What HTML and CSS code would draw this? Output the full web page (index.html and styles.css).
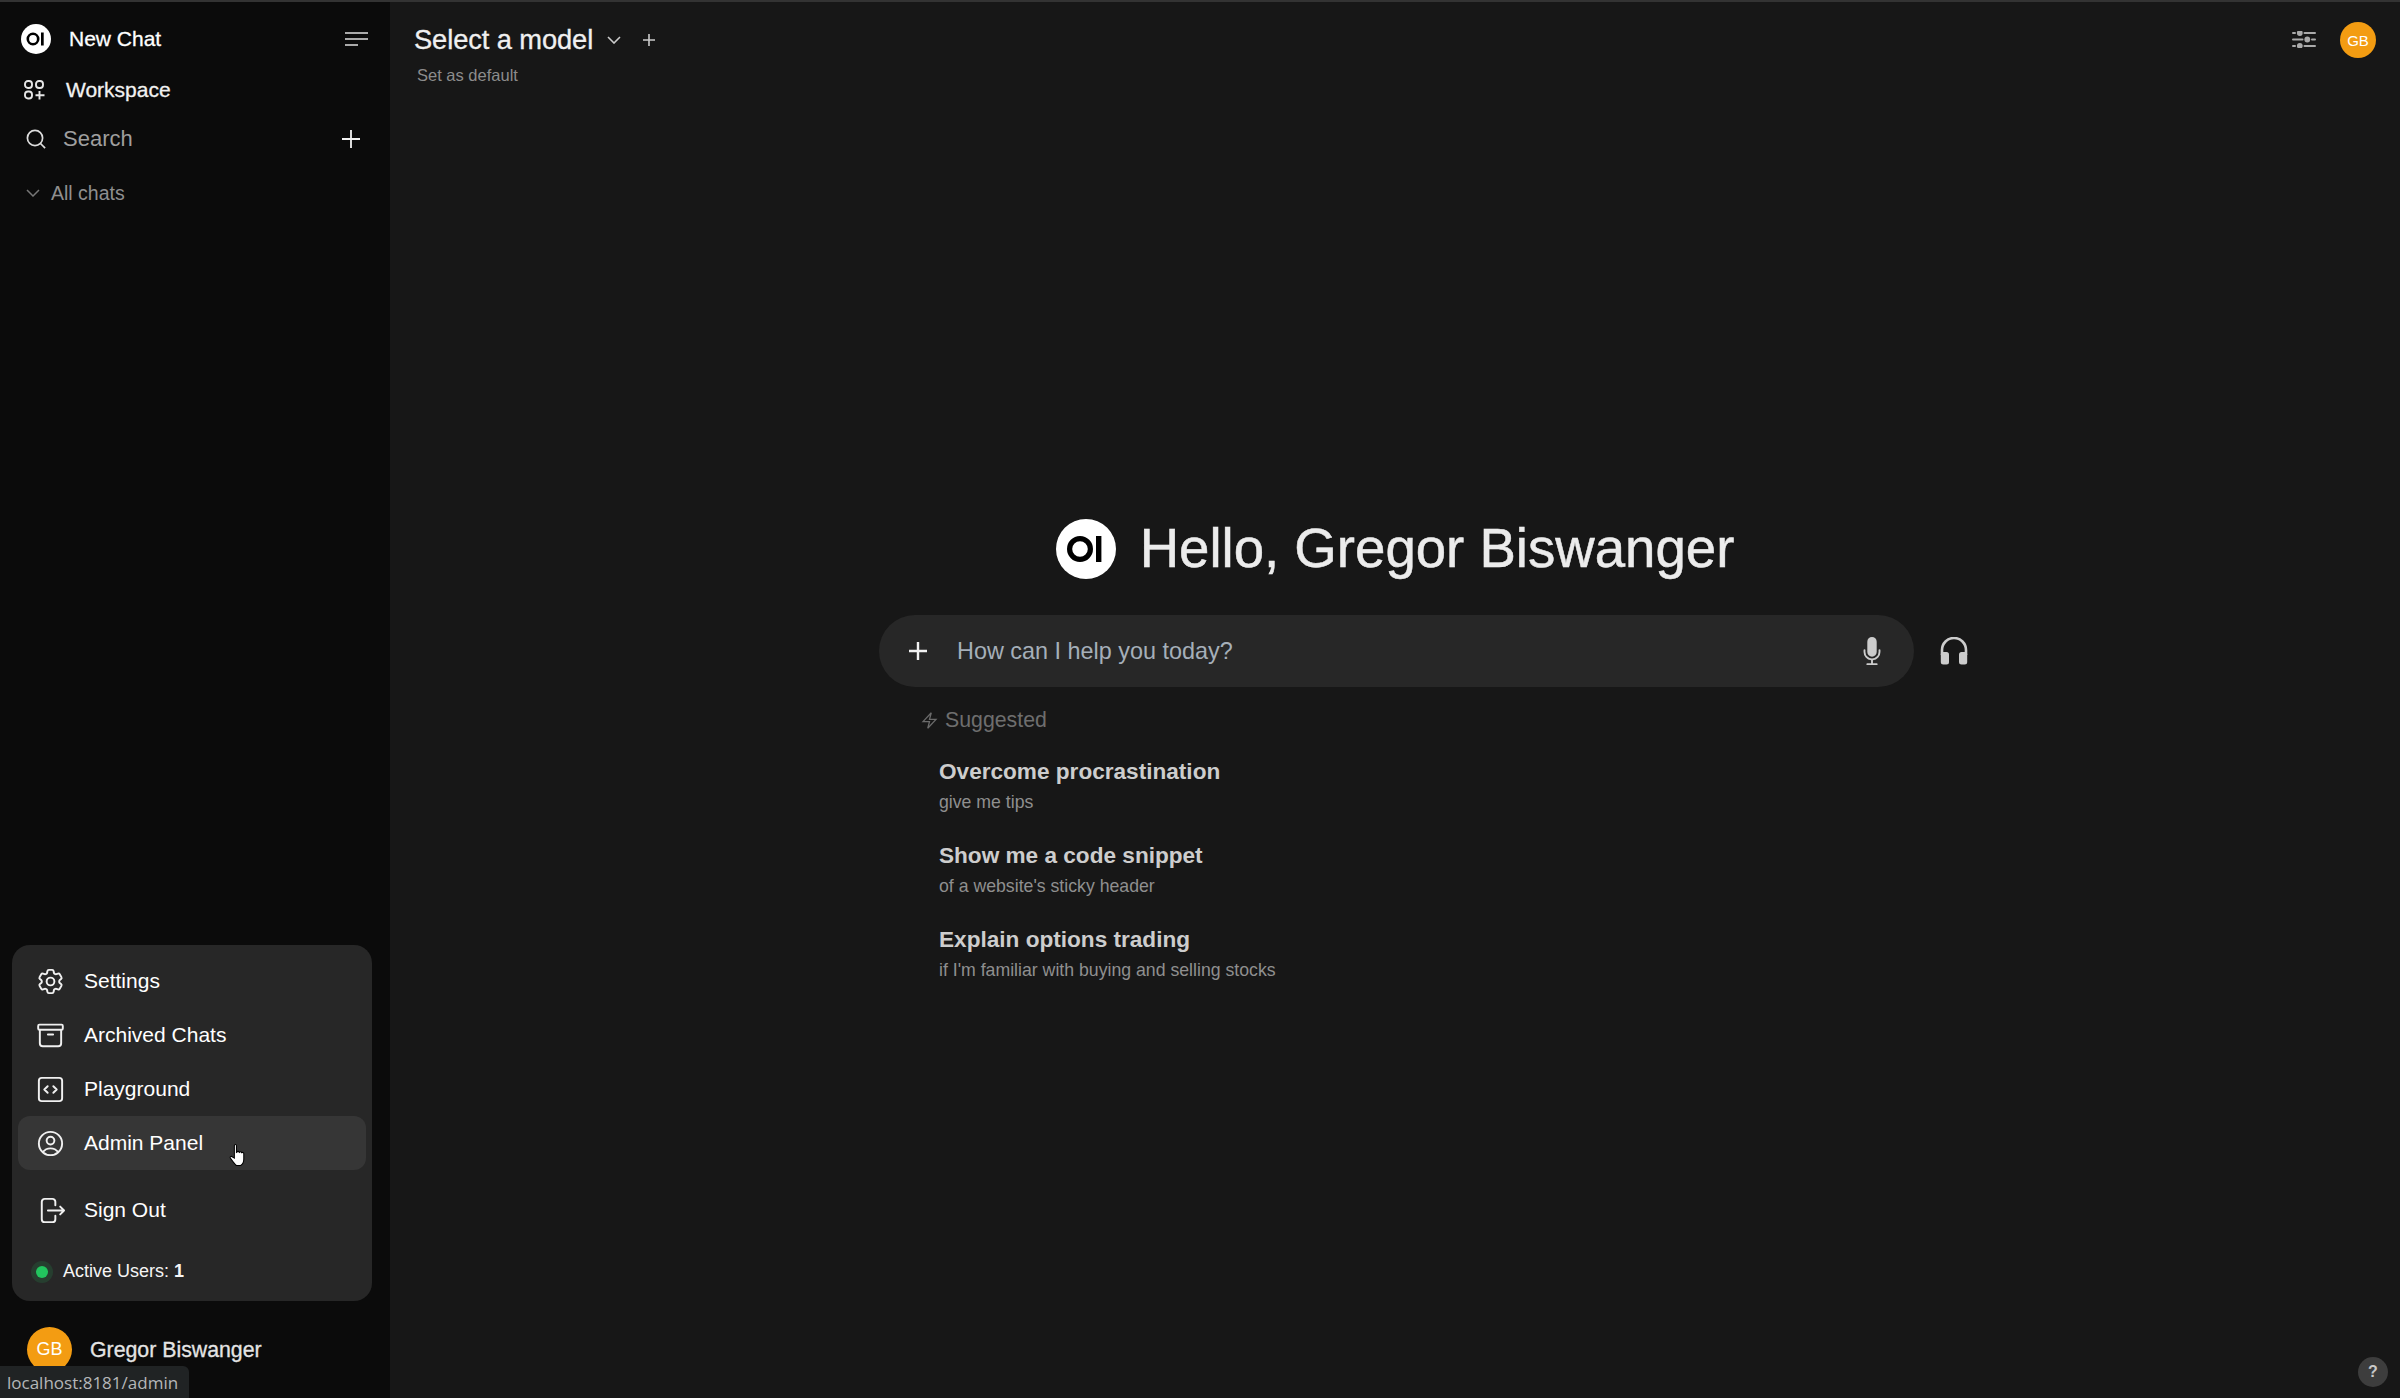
FILE: index.html
```html
<!DOCTYPE html>
<html lang="en">
<head>
<meta charset="UTF-8">
<meta name="viewport" content="width=device-width, initial-scale=1.0">
<title>Open WebUI</title>
<link rel="stylesheet" href="styles.css">
</head>
<body>
<div class="app">
    <aside class="sidebar">
        <div class="side-row new-chat">
            <svg class="logo logo-small" viewBox="0 0 30 30"><circle cx="15" cy="15" r="15" fill="#fff"/><circle cx="12" cy="15" r="5.2" fill="none" stroke="#000" stroke-width="2.6"/><rect x="20" y="8.5" width="2.7" height="13" fill="#000"/></svg>
            <span class="new-chat-label">New Chat</span>
            <svg class="menu-icon" viewBox="0 0 23 14"><path d="M0 1h23M0 7h23M0 13h13" stroke="#aaa" stroke-width="2" fill="none"/></svg>
        </div>
        <div class="side-row workspace">
            <svg class="workspace-icon" viewBox="0 0 21 20" fill="none" stroke="#e6e6e6" stroke-width="1.9"><rect x="1" y="1" width="7" height="7" rx="3"/><rect x="12" y="1" width="7" height="7" rx="3"/><rect x="1" y="11.5" width="7" height="7" rx="3"/><path d="M15.5 11v8.5M11.5 15.2h9"/></svg>
            <span>Workspace</span>
        </div>
        <div class="side-row search">
            <svg class="search-icon" viewBox="0 0 20 20" fill="none" stroke="#ddd" stroke-width="1.7"><circle cx="9" cy="9" r="7.6"/><path d="M14.5 14.5l4.6 4.6"/></svg>
            <span class="search-label">Search</span>
            <svg class="plus-icon" viewBox="0 0 18 18"><path d="M9 0v18M0 9h18" stroke="#f2f2f2" stroke-width="1.8"/></svg>
        </div>
        <div class="side-row all-chats">
            <svg class="chevron" viewBox="0 0 14 8" fill="none" stroke="#777" stroke-width="1.5"><path d="M1 1l6 6 6-6"/></svg>
            <span>All chats</span>
        </div>
        <div class="user-row">
            <div class="avatar avatar-big">GB</div>
            <span class="user-name">Gregor Biswanger</span>
        </div>
    </aside>

    <main class="main">
        <header class="navbar">
            <div class="model-picker">
                <div class="model-line">
                    <span class="model-name">Select a model</span>
                    <svg class="model-chevron" viewBox="0 0 14 8" fill="none" stroke="#ccc" stroke-width="1.6"><path d="M1 1l6 6 6-6"/></svg>
                    <svg class="model-plus" viewBox="0 0 12 12"><path d="M6 0v12M0 6h12" stroke="#ccc" stroke-width="1.6"/></svg>
                </div>
                <div class="set-default">Set as default</div>
            </div>
            <div class="nav-right">
                <svg class="sliders" viewBox="0 0 24 17" fill="#aaa" stroke="none"><rect x="0" y="1" width="4" height="2" rx="1"/><rect x="11.500" y="1" width="12.500" height="2" rx="1"/><rect x="0" y="7.500" width="11.500" height="2" rx="1"/><rect x="19" y="7.500" width="5" height="2" rx="1"/><rect x="0" y="14" width="4" height="2" rx="1"/><rect x="11.500" y="14" width="12.500" height="2" rx="1"/><circle cx="7.800" cy="2" r="2.900"/><circle cx="15.300" cy="8.500" r="2.900"/><circle cx="7.800" cy="14.800" r="2.900"/></svg>
                <div class="avatar avatar-small">GB</div>
            </div>
        </header>

        <section class="chat-start">
            <div class="hello">
                <svg class="logo logo-big" viewBox="0 0 30 30"><circle cx="15" cy="15" r="15" fill="#fff"/><circle cx="12" cy="15" r="5.2" fill="none" stroke="#000" stroke-width="2.6"/><rect x="20" y="8.5" width="2.7" height="13" fill="#000"/></svg>
                <h1>Hello, Gregor Biswanger</h1>
            </div>
            <div class="input-line">
                <div class="input-box">
                    <svg class="input-plus" viewBox="0 0 18 18"><path d="M9 0v18M0 9h18" stroke="#f2f2f2" stroke-width="2.4"/></svg>
                    <span class="placeholder">How can I help you today?</span>
                    <svg class="mic" viewBox="0 0 24 24" fill="#ccc"><path d="M8.25 4.5a3.75 3.75 0 1 1 7.5 0v8.25a3.75 3.75 0 1 1-7.5 0V4.5Z"/><path d="M6 10.5a.75.75 0 0 1 .75.75v1.5a5.25 5.25 0 1 0 10.5 0v-1.5a.75.75 0 0 1 1.5 0v1.5a6.751 6.751 0 0 1-6 6.709v2.291h3a.75.75 0 0 1 0 1.5h-7.5a.75.75 0 0 1 0-1.5h3v-2.291a6.751 6.751 0 0 1-6-6.709v-1.5A.75.75 0 0 1 6 10.5Z"/></svg>
                </div>
                <svg class="headphones" viewBox="0 0 28 28" fill="#ccc"><path d="M2 18v-5a12 12 0 0 1 24 0v5" fill="none" stroke="#ccc" stroke-width="2.6"/><rect x="0.8" y="15" width="8.2" height="12.5" rx="2.5"/><rect x="19" y="15" width="8.2" height="12.5" rx="2.5"/></svg>
            </div>
            <div class="suggested">
                <div class="suggested-head">
                    <svg class="bolt" viewBox="0 0 24 24" fill="none" stroke="#6b6b6b" stroke-width="1.6"><path d="M3.75 13.5 14.25 2.25 12 10.5h8.25L9.75 21.75 12 13.5H3.75Z"/></svg>
                    <span>Suggested</span>
                </div>
                <div class="prompt">
                    <div class="prompt-title">Overcome procrastination</div>
                    <div class="prompt-sub">give me tips</div>
                </div>
                <div class="prompt">
                    <div class="prompt-title">Show me a code snippet</div>
                    <div class="prompt-sub">of a website's sticky header</div>
                </div>
                <div class="prompt">
                    <div class="prompt-title">Explain options trading</div>
                    <div class="prompt-sub">if I'm familiar with buying and selling stocks</div>
                </div>
            </div>
        </section>
    </main>
</div>

<div class="user-menu">
    <div class="menu-item">
        <svg viewBox="0 0 24 24"><path d="M9.594 3.94c.09-.542.56-.94 1.11-.94h2.593c.55 0 1.02.398 1.11.94l.213 1.281c.063.374.313.686.645.87.074.04.147.083.22.127.325.196.72.257 1.075.124l1.217-.456a1.125 1.125 0 0 1 1.37.49l1.296 2.247a1.125 1.125 0 0 1-.26 1.431l-1.003.827c-.293.241-.438.613-.43.992a7.723 7.723 0 0 1 0 .255c-.008.378.137.75.43.991l1.004.827c.424.35.534.955.26 1.43l-1.298 2.247a1.125 1.125 0 0 1-1.369.491l-1.217-.456c-.355-.133-.75-.072-1.076.124a6.47 6.47 0 0 1-.22.128c-.331.183-.581.495-.644.869l-.213 1.281c-.09.543-.56.94-1.11.94h-2.594c-.55 0-1.019-.398-1.11-.94l-.213-1.281c-.062-.374-.312-.686-.644-.87a6.52 6.52 0 0 1-.22-.127c-.325-.196-.72-.257-1.076-.124l-1.217.456a1.125 1.125 0 0 1-1.369-.49l-1.297-2.247a1.125 1.125 0 0 1 .26-1.431l1.004-.827c.292-.24.437-.613.43-.991a6.932 6.932 0 0 1 0-.255c.007-.38-.138-.751-.43-.992l-1.004-.827a1.125 1.125 0 0 1-.26-1.43l1.297-2.247a1.125 1.125 0 0 1 1.37-.491l1.216.456c.356.133.751.072 1.076-.124.072-.044.146-.086.22-.128.332-.183.582-.495.644-.869l.214-1.28Z"/><circle cx="12" cy="12" r="3"/></svg>
        <span>Settings</span>
    </div>
    <div class="menu-item">
        <svg viewBox="0 0 24 24"><path d="M20.25 7.5v10.5a2.25 2.25 0 0 1-2.25 2.25H6A2.25 2.25 0 0 1 3.75 18V7.5M10 11.2h4M3.375 7.5h17.25c.3 0 .9-.3.9-1V4.6c0-.6-.5-1-.9-1H3.375c-.5 0-.9.4-.9 1v1.9c0 .6.5 1 .9 1Z"/></svg>
        <span>Archived Chats</span>
    </div>
    <div class="menu-item">
        <svg viewBox="0 0 24 24"><rect x="3" y="3" width="18" height="18" rx="2.2"/><path d="M9.8 9.5 7.2 12l2.6 2.5M14.2 9.5l2.6 2.5-2.6 2.5"/></svg>
        <span>Playground</span>
    </div>
    <div class="menu-item hovered">
        <svg viewBox="0 0 24 24"><path d="M17.982 18.725A7.488 7.488 0 0 0 12 15.75a7.488 7.488 0 0 0-5.982 2.975m11.963 0a9 9 0 1 0-11.963 0m11.963 0A8.966 8.966 0 0 1 12 21a8.966 8.966 0 0 1-5.982-2.275M15 9.75a3 3 0 1 1-6 0 3 3 0 0 1 6 0Z"/></svg>
        <span>Admin Panel</span>
    </div>
    <div class="menu-item sign-out">
        <svg viewBox="0 0 24 24"><path d="M15.75 8V5.25A2.25 2.25 0 0 0 13.5 3h-6a2.25 2.25 0 0 0-2.25 2.25v13.5A2.25 2.25 0 0 0 7.5 21h6a2.25 2.25 0 0 0 2.25-2.25V16M19.5 15l3-3-3-3M22.5 12H10"/></svg>
        <span>Sign Out</span>
    </div>
    <div class="active-users">
        <span class="dot"></span>
        <span>Active Users: <b>1</b></span>
    </div>
</div>

<svg class="hand-cursor" viewBox="0 0 16 21"><path d="M5 1.5c0-1.300 2-1.300 2 0V8l.5-.2c0-1 1.800-1 2 0l.3.2c.2-.9 1.800-.8 2 .2l.3.2c.3-.7 1.900-.5 1.900.7v5.500c0 2.400-1.300 4.900-3 5.900H7c-1.500-.9-3-3-5.800-7-.8-1.200.6-2.300 1.700-1.300L5 13.500Z" fill="#fff" stroke="#000" stroke-width="1"/></svg>

<div class="status-link">localhost:8181/admin</div>
<div class="help">?</div>
</body>
</html>
```
FILE: styles.css
```css
* {
    box-sizing: border-box;
}
body {
    margin: 0;
    background: #171717;
    color: #eee;
    font-family: "Liberation Sans", Arial, sans-serif;
    overflow: hidden;
}
svg {
    display: block;
    flex-shrink: 0;
}
.app {
    display: flex;
    height: 1398px;
    border-top: 2px solid #333;
}

/* sidebar */
.sidebar {
    width: 390px;
    background: #0b0b0b;
    display: flex;
    flex-direction: column;
    padding: 22px 0 0 0;
}
.side-row {
    display: flex;
    align-items: center;
    padding: 0 22px 0 21px;
}
.new-chat {
    height: 30px;
    font-size: 21px;
    color: #fff;
    -webkit-text-stroke: 0.3px #fff;
}
.logo-small {
    width: 30px;
    height: 30px;
    margin-right: 18px;
}
.new-chat-label {
    flex: 1;
}
.workspace {
    height: 24px;
    margin-top: 24px;
    padding-left: 24px;
    font-size: 21px;
    color: #f2f2f2;
    -webkit-text-stroke: 0.3px #f2f2f2;
}
.workspace-icon {
    width: 21px;
    height: 20px;
    margin-right: 21px;
}
.search {
    height: 24px;
    margin-top: 25px;
    padding-left: 26px;
    font-size: 22px;
    color: #9f9f9f;
}
.search-icon {
    width: 20px;
    height: 20px;
    margin-right: 17px;
}
.search-label {
    flex: 1;
}
.plus-icon {
    width: 18px;
    height: 18px;
    margin-right: 8px;
}
.menu-icon {
    width: 23px;
    height: 14px;
}
.all-chats {
    height: 22px;
    margin-top: 31px;
    padding-left: 26px;
    font-size: 19.5px;
    color: #8f8f8f;
}
.chevron {
    width: 14px;
    height: 8px;
    margin-right: 11px;
}
.user-row {
    display: flex;
    align-items: center;
    margin-top: auto;
    padding: 0 0 26px 27px;
    font-size: 21.3px;
    color: #e4e4e4;
}
.user-name {
    padding-top: 2px;
    -webkit-text-stroke: 0.3px #e4e4e4;
}
.avatar {
    background: #f39c12;
    color: #fff;
    border-radius: 50%;
    display: flex;
    align-items: center;
    justify-content: center;
}
.avatar-big {
    width: 45px;
    height: 45px;
    font-size: 18px;
    margin-right: 18px;
}
.avatar-small {
    width: 36px;
    height: 36px;
    font-size: 15px;
}

/* main area */
.main {
    flex: 1;
    display: flex;
    flex-direction: column;
}
.navbar {
    display: flex;
    justify-content: space-between;
    padding: 20px 24px 0 25px;
}
.model-line {
    display: flex;
    align-items: center;
    height: 36px;
}
.model-name {
    font-size: 27.3px;
    margin-left: -1px;
    color: #f0f0f0;
    letter-spacing: -0.1px;
    -webkit-text-stroke: 0.3px #f0f0f0;
}
.model-chevron {
    width: 14px;
    height: 8px;
    margin-left: 14px;
}
.model-plus {
    width: 12px;
    height: 12px;
    margin-left: 22px;
}
.set-default {
    font-size: 16.5px;
    color: #8c8c8c;
    margin: 8px 0 0 2px;
}
.nav-right {
    display: flex;
    align-items: flex-start;
    gap: 24px;
}
.sliders {
    width: 24px;
    height: 17px;
    margin-top: 9px;
}
.chat-start {
    width: 1100px;
    margin-left: 489px;
    padding-top: 432px;
}
.hello {
    display: flex;
    align-items: center;
    justify-content: center;
    width: 1032px;
    gap: 24px;
}
.logo-big {
    width: 60px;
    height: 60px;
}
.hello h1 {
    margin: 0;
    font-size: 54.6px;
    font-weight: 400;
    color: #ececec;
    -webkit-text-stroke: 0.5px #ececec;
}
.input-line {
    display: flex;
    align-items: center;
    margin-top: 35px;
}
.input-box {
    width: 1035px;
    height: 72px;
    background: #272727;
    border-radius: 36px;
    display: flex;
    align-items: center;
    padding: 0 24px 0 30px;
}
.input-plus {
    width: 18px;
    height: 18px;
    margin-right: 30px;
}
.placeholder {
    flex: 1;
    font-size: 23.4px;
    color: #a5afb9;
}
.mic {
    width: 30px;
    height: 30px;
    margin-right: 3px;
}
.headphones {
    width: 28px;
    height: 28px;
    margin-left: 26px;
}
.suggested {
    padding: 21px 0 0 41px;
}
.suggested-head {
    display: flex;
    align-items: center;
    gap: 6px;
    font-size: 21.3px;
    color: #6e6e6e;
    height: 24px;
}
.bolt {
    width: 19px;
    height: 19px;
}
.prompt {
    margin: 28px 0 0 19px;
    height: 52px;
}
.prompt + .prompt {
    margin-top: 32px;
}
.prompt-title {
    font-size: 22.6px;
    font-weight: 700;
    color: #cdcdcd;
    line-height: 24px;
}
.prompt-sub {
    font-size: 17.7px;
    color: #8f8f8f;
    line-height: 20px;
    margin-top: 8px;
}

/* popup over the sidebar */
.user-menu {
    position: absolute;
    left: 12px;
    top: 945px;
    width: 360px;
    height: 356px;
    background: #272727;
    border-radius: 18px;
    padding: 9px 6px;
}
.menu-item {
    display: flex;
    align-items: center;
    height: 54px;
    padding-left: 17px;
    font-size: 21px;
    color: #fff;
    border-radius: 12px;
}
.menu-item svg {
    width: 31px;
    height: 31px;
    margin-right: 18px;
    fill: none;
    stroke: #f0f0f0;
    stroke-width: 1.5;
    stroke-linecap: round;
    stroke-linejoin: round;
}
.menu-item.hovered {
    background: #363636;
}
.menu-item.sign-out {
    margin-top: 13px;
}
.active-users {
    display: flex;
    align-items: center;
    margin: 24px 0 0 12px;
    font-size: 18px;
    color: #f5f5f5;
}
.active-users b {
    font-weight: 700;
}
.dot {
    width: 12px;
    height: 12px;
    border-radius: 50%;
    background: #22c55e;
    box-shadow: 0 0 0 5px rgba(34, 197, 94, 0.15);
    margin: 0 15px 0 6px;
}
.hand-cursor {
    position: absolute;
    left: 229px;
    top: 1144px;
    width: 17px;
    height: 22px;
}
.status-link {
    position: absolute;
    left: 0;
    bottom: 0;
    width: 189px;
    height: 32px;
    padding: 5px 0 0 7px;
    background: #202324;
    border-top-right-radius: 6px;
    font-family: "Open Sans", sans-serif;
    font-size: 17px;
    line-height: 24px;
    color: #b5b7b9;
}
.help {
    position: absolute;
    left: 2358px;
    top: 1357px;
    width: 30px;
    height: 30px;
    border-radius: 50%;
    background: #3d3d3d;
    color: #c8c8c8;
    font-size: 16px;
    font-weight: 700;
    text-align: center;
    line-height: 30px;
}
```
